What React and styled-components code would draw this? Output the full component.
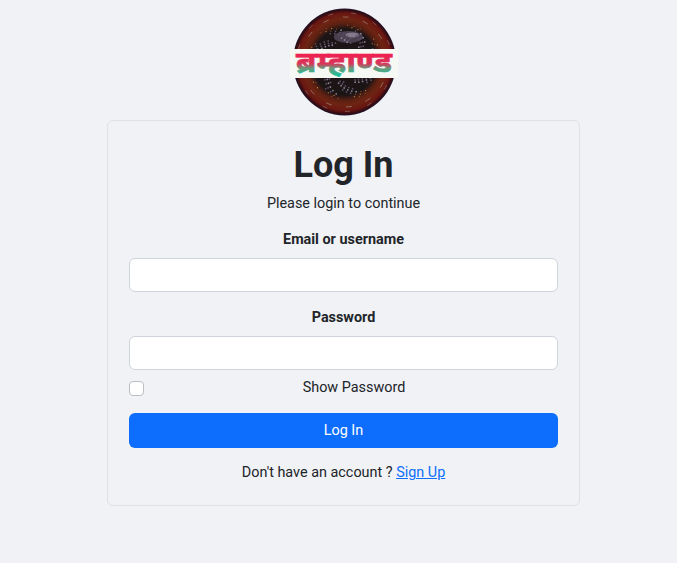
import React, { useState } from 'react';
import styled, { createGlobalStyle } from 'styled-components';

const GlobalStyle = createGlobalStyle`
	html, body {
		margin: 0;
		padding: 0;
		background: #f0f2f5;
	}
	body {
		font-family: Roboto, "Liberation Sans", sans-serif;
		color: #212529;
	}
`;

const Page = styled.div`
	width: 677px;
	height: 563px;
	overflow: hidden;
	display: flex;
	flex-direction: column;
	align-items: center;
	padding: 8px 0 0 10px;
	box-sizing: border-box;
`;

const LogoBox = styled.div`
	width: 108px;
	height: 108px;
	margin-bottom: 4px;
	svg { display: block; }
`;

const Card = styled.form`
	width: 473px;
	height: 386px;
	box-sizing: border-box;
	padding: 22px 21px 0;
	border: 1px solid #dee2e6;
	border-radius: 6px;
	text-align: center;
`;

const Title = styled.h1`
	margin: 0;
	font-size: 36px;
	line-height: 44px;
	font-weight: 700;
`;

const Subtitle = styled.p`
	margin: 6px 0 0;
	font-size: 14.4px;
	line-height: 22px;
`;

const Field = styled.div`
	margin-top: ${p => p.$top}px;
`;

const Label = styled.label`
	display: block;
	font-size: 14.4px;
	line-height: 22px;
	font-weight: 700;
	margin-bottom: 8px;
`;

const Input = styled.input`
	display: block;
	width: 100%;
	height: 34px;
	margin-top: -1px;
	box-sizing: border-box;
	background: #fff;
	border: 1px solid #ced4da;
	border-radius: 6px;
	outline: none;
`;

const ShowRow = styled.div`
	display: flex;
	align-items: center;
	height: 22px;
	margin-top: 7px;
`;

const Check = styled.input`
	appearance: none;
	flex: none;
	width: 15px;
	height: 15px;
	margin: 0 6px 0 0;
	background: #fff;
	border: 1px solid #bbbfc4;
	border-radius: 4px;
`;

const ShowLabel = styled.label`
	flex: 1;
	font-size: 14.4px;
	line-height: 22px;
`;

const Submit = styled.button`
	display: block;
	width: 100%;
	height: 35px;
	margin-top: 14px;
	padding: 0;
	background: #0d6efd;
	color: #fff;
	border: none;
	border-radius: 6px;
	font-family: inherit;
	font-size: 14.4px;
	font-weight: 400;
`;

const Footer = styled.p`
	margin: 14px 0 0;
	font-size: 14.4px;
	line-height: 22px;
`;

const FooterLink = styled.a`
	color: #0d6efd;
	text-decoration: underline;
`;

// scattered flecks for the logo's mottled core and fringe
const flecks = Array.from({ length: 170 }, (_, i) => {
	const angle = i * 2.39996;
	const radius = 20 + ((i * 37) % 19);
	const colour = radius > 33 ? (i % 2 ? '#d09a58' : '#9a5a30') : (i % 3 ? '#5e5068' : '#8d8296');
	return {
		x: 54 + Math.cos(angle) * radius,
		y: 54 + Math.sin(angle) * radius,
		r: radius > 33 ? 0.6 : 0.9,
		colour,
	};
});

const Logo = () => (
	<svg width="108" height="108" viewBox="0 0 108 108">
		<defs>
			<radialGradient id="disc" cx="50%" cy="50%" r="50%">
				<stop offset="0%" stopColor="#1b1618" />
				<stop offset="62%" stopColor="#1c1516" />
				<stop offset="72%" stopColor="#5a2012" />
				<stop offset="80%" stopColor="#6e2412" />
				<stop offset="91%" stopColor="#6a1712" />
				<stop offset="96%" stopColor="#3a0c12" />
				<stop offset="100%" stopColor="#1c1026" />
			</radialGradient>
			<linearGradient id="word" gradientUnits="userSpaceOnUse" x1="0" y1="46" x2="0" y2="69">
				<stop offset="0%" stopColor="#f0204f" />
				<stop offset="42%" stopColor="#d8355a" />
				<stop offset="62%" stopColor="#6a9a7c" />
				<stop offset="100%" stopColor="#0cc8a0" />
			</linearGradient>
		</defs>
		<g transform="translate(54.5 54) scale(0.965 1) translate(-54 -54)">
			<circle cx="54" cy="54" r="53.5" fill="url(#disc)" />
			<ellipse cx="58" cy="29" rx="15" ry="6" fill="#4a4050" />
			<ellipse cx="62" cy="27" rx="7" ry="2.5" fill="#85788c" />
			{flecks.map((f, i) => (
				<circle key={i} cx={f.x} cy={f.y} r={f.r} fill={f.colour} />
			))}
			<circle cx="54" cy="54" r="45" fill="none" stroke="#a08a80" strokeWidth="0.7" strokeDasharray="6 15" />
			<circle cx="54" cy="54" r="49.5" fill="none" stroke="#8c7068" strokeWidth="0.7" strokeDasharray="5 19" />
		</g>
		<rect x="0" y="41" width="108" height="29" fill="#f6f8f4" />
		<text
			x="54"
			y="64"
			textAnchor="middle"
			fontFamily="'Noto Sans', 'DejaVu Sans', sans-serif"
			fontSize="29"
			fontWeight="700"
			fill="url(#word)"
			stroke="url(#word)"
			strokeWidth="0.7"
			textLength="96"
			lengthAdjust="spacingAndGlyphs"
		>
			ब्रम्हाण्ड
		</text>
	</svg>
);

export default function App() {
	const [show, setShow] = useState(false);
	return (
		<Page>
			<GlobalStyle />
			<LogoBox>
				<Logo />
			</LogoBox>
			<Card onSubmit={e => e.preventDefault()}>
				<Title>Log In</Title>
				<Subtitle>Please login to continue</Subtitle>
				<Field $top={14}>
					<Label htmlFor="email">Email or username</Label>
					<Input id="email" type="text" />
				</Field>
				<Field $top={15}>
					<Label htmlFor="password">Password</Label>
					<Input id="password" type={show ? 'text' : 'password'} />
				</Field>
				<ShowRow>
					<Check id="show" type="checkbox" checked={show} onChange={e => setShow(e.target.checked)} />
					<ShowLabel htmlFor="show">Show Password</ShowLabel>
				</ShowRow>
				<Submit type="submit">Log In</Submit>
				<Footer>
					Don't have an account ? <FooterLink href="#">Sign Up</FooterLink>
				</Footer>
			</Card>
		</Page>
	);
}
